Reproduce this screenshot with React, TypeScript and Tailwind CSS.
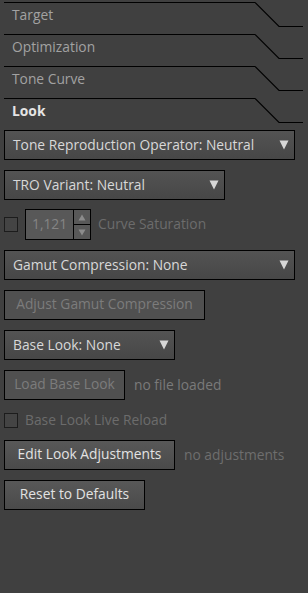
import React from 'react';

const FONT = { fontFamily: '"Open Sans", "Noto Sans", sans-serif' };

function Tab({ label, active = false }: { label: string; active?: boolean }) {
  return (
    <div className="flex h-8 pl-1">
      <div
        className={
          'mt-[2px] h-[24px] w-[251px] border-t border-black pl-2 text-[13.8px] leading-[23px] ' +
          (active ? 'font-bold text-[#e4e4e4]' : 'text-[#a2a2a2]')
        }
      >
        {label}
      </div>
      <svg width="48" height="32" className="shrink-0">
        <path d="M0 2.5 L24 26.5 L48 26.5" fill="none" stroke="#000" strokeWidth="1.2" />
      </svg>
    </div>
  );
}

function Arrow() {
  return (
    <svg width="10" height="10" viewBox="0 0 10 10">
      <polygon points="0.5,0.5 9.5,0.5 5,9.5" fill="#d6d6d6" />
    </svg>
  );
}

function Dropdown({ label, width }: { label: string; width: string }) {
  return (
    <div
      className={
        'flex h-[30px] items-center justify-between border border-black bg-gradient-to-b from-[#535353] to-[#474747] pl-2 pr-[5px] text-[13.8px] leading-[28px] text-[#d8d8d8] ' +
        width
      }
    >
      <span className="-mt-[1px]">{label}</span>
      <Arrow />
    </div>
  );
}

function Button({ label, width, disabled = false }: { label: string; width: string; disabled?: boolean }) {
  return (
    <div
      className={
        'flex h-[30px] items-center justify-center border border-black text-[13.8px] ' +
        (disabled
          ? 'bg-[#505050] text-[#7c7c7c] '
          : 'bg-gradient-to-b from-[#585858] to-[#4a4a4a] text-[#e2e2e2] ') +
        width
      }
    >
      <span className="-mt-[1px]">{label}</span>
    </div>
  );
}

function Checkbox() {
  return <div className="h-[15px] w-[14px] shrink-0 border border-[#1c1c1c] bg-[#444444]" />;
}

export default function App() {
  return (
    <div className="h-[593px] w-[308px] overflow-hidden bg-[#404040]" style={FONT}>
      <Tab label="Target" />
      <Tab label="Optimization" />
      <Tab label="Tone Curve" />
      <Tab label="Look" active />

      <div className="flex flex-col gap-[10px] px-1 pt-[2px]">
        <Dropdown label="Tone Reproduction Operator: Neutral" width="w-[291px]" />
        <Dropdown label="TRO Variant: Neutral" width="w-[221px]" />

        <div className="-mt-[1px] flex h-[31px] items-center gap-[7px]">
          <Checkbox />
          <div className="flex h-[31px] w-[66px] border border-black bg-[#585858]">
            <div className="flex flex-1 items-center pl-[6px] text-[13.8px] text-[#858585]">1,121</div>
            <div className="flex w-[17px] flex-col border-l border-black">
              <div className="flex flex-1 items-center justify-center border-b border-black">
                <svg width="8" height="7" viewBox="0 0 8 7">
                  <polygon points="4,0.5 7.5,6.5 0.5,6.5" fill="#8c8c8c" />
                </svg>
              </div>
              <div className="flex flex-1 items-center justify-center">
                <svg width="8" height="7" viewBox="0 0 8 7">
                  <polygon points="0.5,0.5 7.5,0.5 4,6.5" fill="#8c8c8c" />
                </svg>
              </div>
            </div>
          </div>
          <span className="text-[13.8px] text-[#6c6c6c]">Curve Saturation</span>
        </div>

        <Dropdown label="Gamut Compression: None" width="w-[291px]" />
        <Button label="Adjust Gamut Compression" width="w-[201px]" disabled />
        <Dropdown label="Base Look: None" width="w-[171px]" />

        <div className="flex items-center gap-[9px]">
          <Button label="Load Base Look" width="w-[121px]" disabled />
          <span className="text-[13.8px] text-[#7a7a7a]">no file loaded</span>
        </div>

        <div className="flex h-[20px] items-center gap-[7px]">
          <Checkbox />
          <span className="text-[13.8px] text-[#6c6c6c]">Base Look Live Reload</span>
        </div>

        <div className="flex items-center gap-[9px]">
          <Button label="Edit Look Adjustments" width="w-[171px]" />
          <span className="text-[13.8px] text-[#6e6e6e]">no adjustments</span>
        </div>

        <Button label="Reset to Defaults" width="w-[141px]" />
      </div>
    </div>
  );
}
